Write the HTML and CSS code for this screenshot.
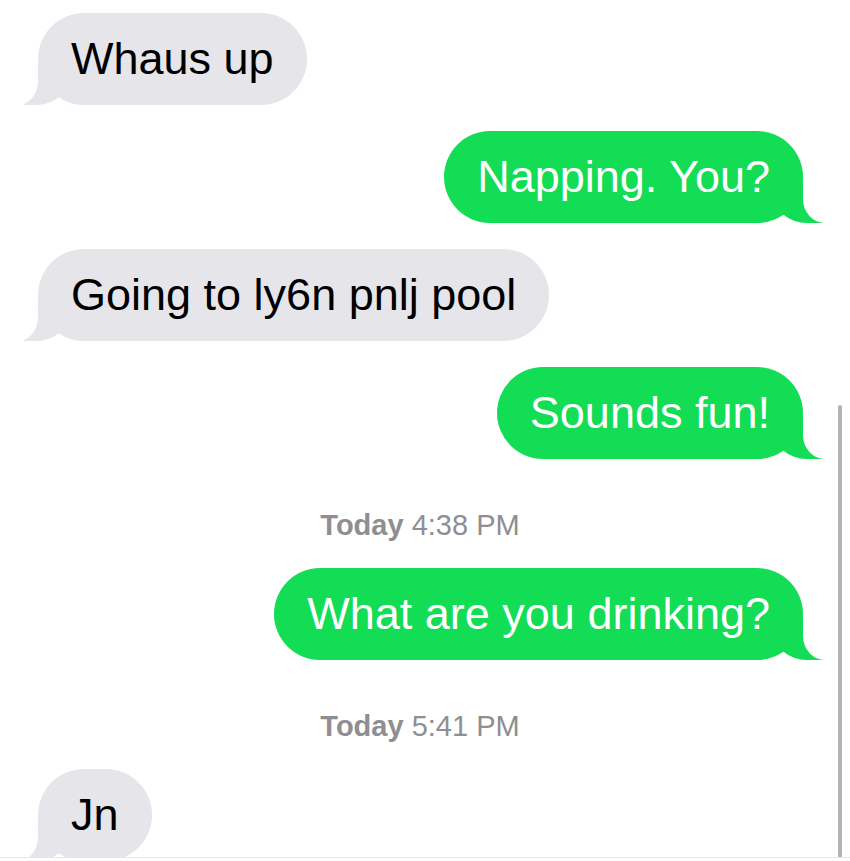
FILE: index.html
```html
<!DOCTYPE html>
<html>
<head>
<meta charset="utf-8">
<link rel="stylesheet" href="styles.css">
</head>
<body>
<div class="screen">
  <div class="thread">
    <div class="row in"><div class="bubble gray">Whaus up</div></div>
    <div class="row out"><div class="bubble green">Napping. You?</div></div>
    <div class="row in"><div class="bubble gray">Going to ly6n pnlj pool</div></div>
    <div class="row out"><div class="bubble green">Sounds fun!</div></div>
    <div class="stamp"><b>Today</b> 4:38 PM</div>
    <div class="row out"><div class="bubble green">What are you drinking?</div></div>
    <div class="stamp"><b>Today</b> 5:41 PM</div>
    <div class="row in"><div class="bubble gray">Jn</div></div>
  </div>
  <div class="scrollbar"></div>
  <div class="bottom-edge"></div>
</div>
</body>
</html>
```
FILE: styles.css
```css
html, body {
  margin: 0;
  padding: 0;
  background: #ffffff;
}

.screen {
  position: relative;
  width: 850px;
  height: 861px;
  overflow: hidden;
  background: #ffffff;
  font-family: "Liberation Sans", Arial, sans-serif;
}

.thread {
  display: flex;
  flex-direction: column;
  gap: 26px;
  padding-top: 13px;
}

.row {
  display: flex;
}

.row.in {
  justify-content: flex-start;
  padding-left: 38px;
}

.row.out {
  justify-content: flex-end;
  padding-right: 47px;
}

.bubble {
  position: relative;
  height: 92px;
  line-height: 92px;
  padding: 0 33px;
  border-radius: 46px;
  font-size: 45px;
  white-space: nowrap;
}

.bubble.gray {
  background: #e5e5ea;
  color: #000000;
}

.bubble.green {
  background: #13dc55;
  color: #ffffff;
}

/* tails */
.bubble::before,
.bubble::after {
  content: "";
  position: absolute;
  bottom: 0;
  height: 42px;
}

.bubble.gray::before {
  left: -14px;
  width: 46px;
  background: #e5e5ea;
  border-bottom-right-radius: 34px 30px;
}

.bubble.gray::after {
  left: -24px;
  width: 24px;
  background: #ffffff;
  border-bottom-right-radius: 20px 24px;
}

.bubble.green::before {
  right: -20px;
  width: 50px;
  background: #13dc55;
  border-bottom-left-radius: 34px 30px;
}

.bubble.green::after {
  right: -32px;
  width: 32px;
  background: #ffffff;
  border-bottom-left-radius: 22px 24px;
}

.stamp {
  margin: 26px 0 3px;
  padding-right: 10px;
  text-align: center;
  font-size: 29px;
  line-height: 28px;
  color: #8e8e93;
}

.stamp b {
  font-weight: bold;
}

.scrollbar {
  position: absolute;
  left: 838px;
  top: 405px;
  width: 4px;
  bottom: 2px;
  border-radius: 2px;
  background: #b3b3b3;
}

.bottom-edge {
  position: absolute;
  left: 0;
  right: 0;
  bottom: 0;
  height: 3px;
  background: #ffffff;
  border-top: 1px solid #e6e6e6;
}
```
